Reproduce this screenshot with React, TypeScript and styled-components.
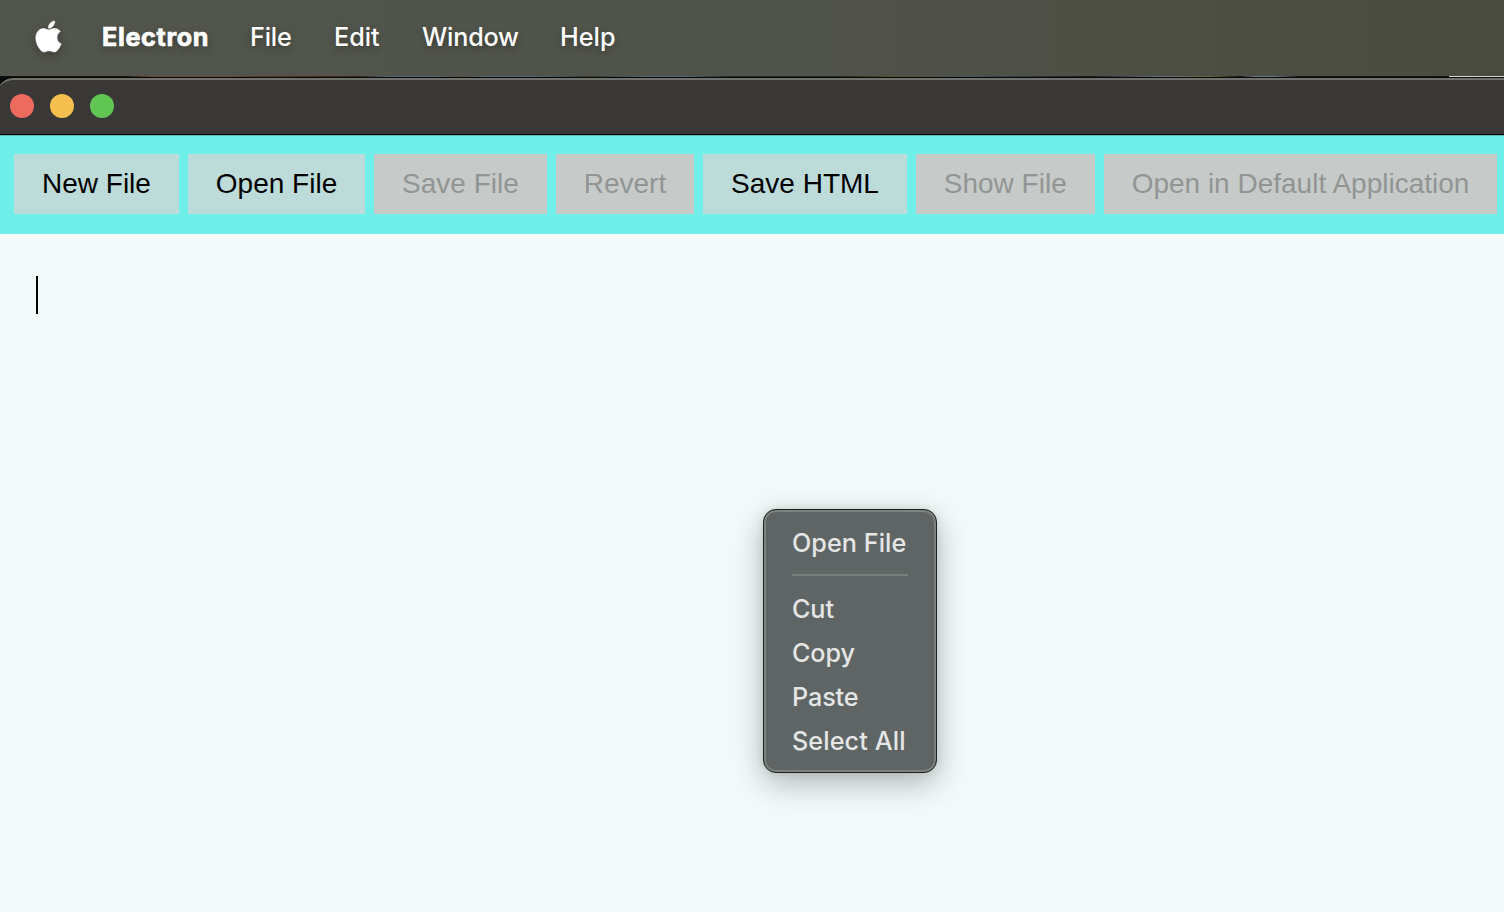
import React from "react";
import styled, { createGlobalStyle } from "styled-components";
import { SiApple } from "react-icons/si";

const GlobalStyle = createGlobalStyle`
  * { box-sizing: border-box; }
  html, body { margin: 0; padding: 0; }
  body { overflow: hidden; background: #f2fbfa; }
`;

const Screen = styled.div`
  display: flex;
  flex-direction: column;
  width: 1504px;
  height: 912px;
  overflow: hidden;
  background: #f2fbfa;
`;

const MenuBar = styled.header`
  display: flex;
  align-items: center;
  flex: none;
  height: 76px;
  padding: 0 0 2px 32.5px;
  color: #fff;
  background: linear-gradient(90deg, #52554b 0%, #50534a 55%, #4a4b3e 100%);
  font-family: Inter, sans-serif;
  font-size: 25.2px;
`;

const AppleLogo = styled(SiApple)`
  flex: none;
  width: 31px;
  height: 31px;
  margin: 0 38.5px 1px 0;
  overflow: visible;
  stroke: #fff;
  stroke-width: 0.5px;
  filter: drop-shadow(0 3px 4px rgba(0, 0, 0, 0.3));
`;

const MenuTitle = styled.span<{ $width: number; $spacing: number; $bold?: boolean }>`
  flex: none;
  width: ${(p) => p.$width}px;
  font-weight: ${(p) => (p.$bold ? 700 : 500)};
  letter-spacing: ${(p) => p.$spacing}px;
  white-space: nowrap;
  text-shadow: 0 3px 7px rgba(0, 0, 0, 0.3);
  -webkit-text-stroke: ${(p) => (p.$bold ? "0.7px #fff" : "0")};
`;

const DesktopStrip = styled.div`
  display: flex;
  justify-content: flex-end;
  flex: none;
  height: 1px;
  background: linear-gradient(90deg, #10150c 0 125px, #70432f 150px 215px, #38251a 360px, #50657a 390px 435px, #514c3c 460px, #506880 490px 530px, #343b2c 590px, #52677b 650px 685px, #20291d 730px 840px, #505126 890px, #435260 970px, #181d1b 1090px, #626d8b 1160px, #68672d 1210px, #11150f 1240px, #6b7694 1255px 1275px, #11150f 1300px);
`;

const DesktopEdge = styled.div`
  width: 55px;
  background: #d8d8d6;
`;

const WindowFrame = styled.main`
  display: flex;
  flex: 1;
  flex-direction: column;
  min-height: 0;
  background: #070a06;
`;

const TitleBar = styled.div`
  display: flex;
  align-items: center;
  flex: none;
  gap: 16px;
  height: 57px;
  margin-top: 1px;
  margin-left: -4px;
  padding: 0 0 2px 14px;
  border-top: 2px solid #72726f;
  border-bottom: 1px solid #000;
  border-radius: 18px 0 0 0;
  background: #393836;
`;

const WindowControl = styled.span<{ $color: string }>`
  width: 24px;
  height: 24px;
  border-radius: 50%;
  background: ${(p) => p.$color};
`;

const Toolbar = styled.nav`
  display: flex;
  flex: none;
  gap: 8.9px;
  height: 99px;
  padding: 18px 0 20px 14px;
  border-top: 1px solid #5cb9b5;
  background: #70eeea;
`;

const ToolButton = styled.button`
  flex: none;
  height: 60px;
  padding: 0 28px 1px;
  border: 0;
  color: #000;
  background: #bddbd8;
  font-family: "Liberation Sans", Arial, sans-serif;
  font-size: 28px;
  white-space: nowrap;

  &:disabled {
    color: #919594;
    background: #c6cbc9;
  }
`;

const Editor = styled.section`
  flex: 1;
  padding: 42px 36px;
  background: #f2fbfa;
`;

const Caret = styled.div`
  width: 2px;
  height: 38px;
  background: #000;
`;

const ContextMenu = styled.div`
  position: absolute;
  top: 509px;
  left: 763px;
  display: flex;
  flex-direction: column;
  width: 174px;
  height: 264px;
  padding: 11px 28px 0 28px;
  border: 1px solid #1d2121;
  border-radius: 13px;
  background: #5f6564;
  box-shadow: inset 0 0 0 2px #7d8281, 0 10px 32px rgba(0, 0, 0, 0.28), 0 0 8px rgba(0, 0, 0, 0.1);
`;

const ContextItem = styled.div<{ $spacing: number }>`
  height: 44px;
  color: #e5e6e6;
  font: 450 25.2px/44px Inter, sans-serif;
  letter-spacing: ${(p) => p.$spacing}px;
  white-space: nowrap;
`;

const Separator = styled.div`
  height: 2px;
  margin: 9px 0 11px;
  background: #777d7b;
`;

const tools = [
  { label: "New File" },
  { label: "Open File" },
  { label: "Save File", disabled: true },
  { label: "Revert", disabled: true },
  { label: "Save HTML" },
  { label: "Show File", disabled: true },
  { label: "Open in Default Application", disabled: true },
];

export default function App() {
  return (
    <Screen>
      <GlobalStyle />
      <MenuBar>
        <AppleLogo />
        <MenuTitle $width={148} $spacing={0.65} $bold>Electron</MenuTitle>
        <MenuTitle $width={84} $spacing={-0.2}>File</MenuTitle>
        <MenuTitle $width={88} $spacing={0}>Edit</MenuTitle>
        <MenuTitle $width={138} $spacing={-0.2}>Window</MenuTitle>
        <MenuTitle $width={80} $spacing={0}>Help</MenuTitle>
      </MenuBar>
      <DesktopStrip><DesktopEdge /></DesktopStrip>
      <WindowFrame>
        <TitleBar>
          <WindowControl $color="#ed6a5f" />
          <WindowControl $color="#f5bf4f" />
          <WindowControl $color="#62c655" />
        </TitleBar>
        <Toolbar>
          {tools.map((tool) => (
            <ToolButton key={tool.label} disabled={tool.disabled}>{tool.label}</ToolButton>
          ))}
        </Toolbar>
        <Editor><Caret /></Editor>
      </WindowFrame>
      <ContextMenu>
        <ContextItem $spacing={0.05}>Open File</ContextItem>
        <Separator />
        <ContextItem $spacing={-0.1}>Cut</ContextItem>
        <ContextItem $spacing={-0.1}>Copy</ContextItem>
        <ContextItem $spacing={-0.1}>Paste</ContextItem>
        <ContextItem $spacing={0.1}>Select All</ContextItem>
      </ContextMenu>
    </Screen>
  );
}
